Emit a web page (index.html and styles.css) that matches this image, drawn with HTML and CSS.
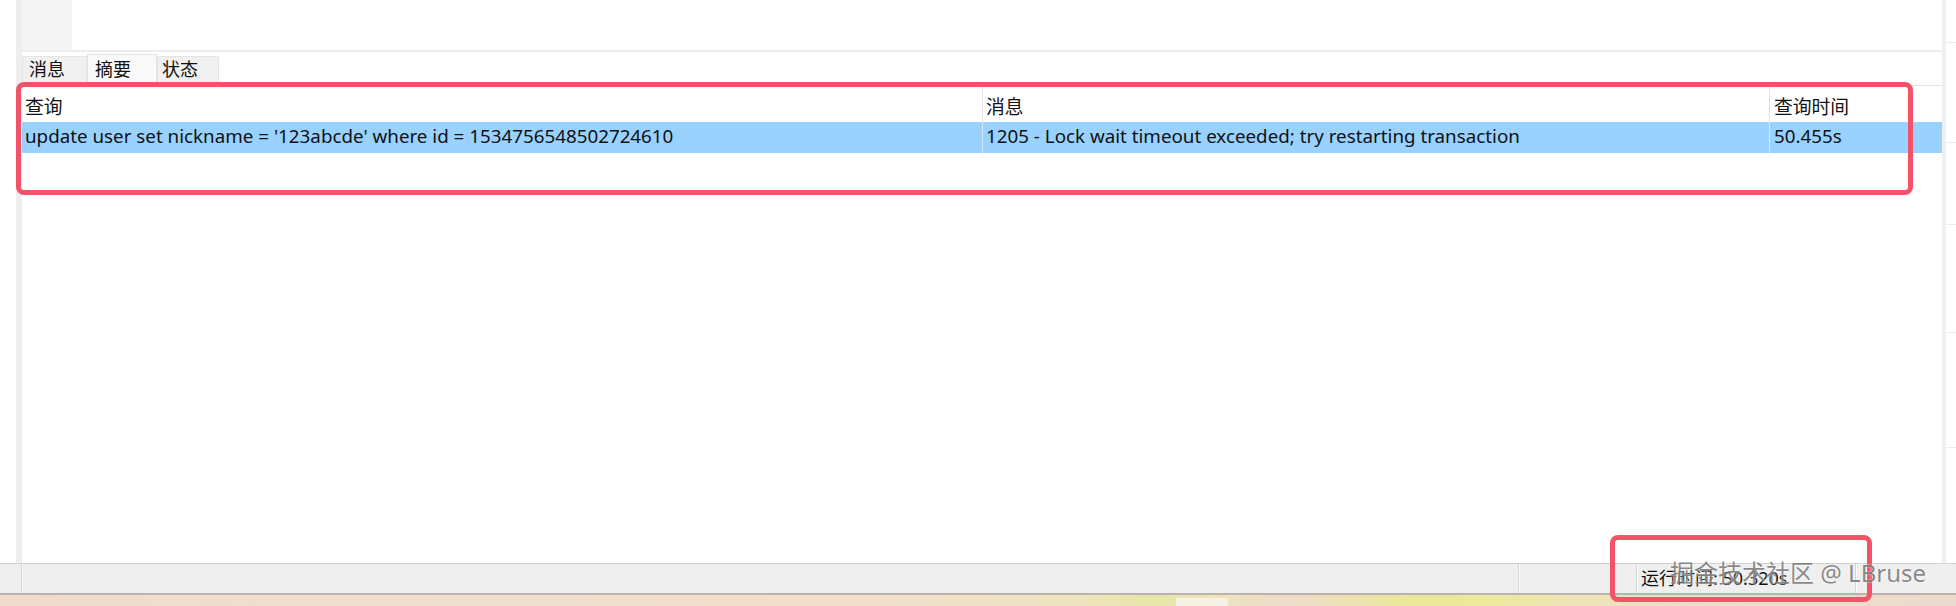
FILE: index.html
```html
<!DOCTYPE html>
<html lang="zh">
<head>
<meta charset="utf-8">
<title>查询结果</title>
<link rel="stylesheet" href="styles.css">
</head>
<body>
<div class="app">
  <div class="main">
    <div class="gutter"></div>
    <div class="panel">
      <div class="toparea"><div class="topblock"></div></div>
      <div class="tabs">
        <div class="tab t1">消息</div>
        <div class="tab t2 active">摘要</div>
        <div class="tab t3">状态</div>
      </div>
      <div class="grid">
        <div class="grid-row head">
          <div class="cell c1">查询</div>
          <div class="cell c2">消息</div>
          <div class="cell c3">查询时间</div>
        </div>
        <div class="grid-row sel">
          <div class="cell c1">update user set nickname = '123abcde' where id = 1534756548502724610</div>
          <div class="cell c2">1205 - Lock wait timeout exceeded; try restarting transaction</div>
          <div class="cell c3">50.455s</div>
        </div>
      </div>
    </div>
    <div class="side">
      <div class="side-line h1"></div>
      <div class="side-line h2"></div>
      <div class="side-line h3"></div>
      <div class="side-line h4"></div>
      <div class="side-line h5"></div>
    </div>
  </div>
  <div class="statusbar">
    <div class="sb s1"></div>
    <div class="sb s2"></div>
    <div class="sb s3"></div>
    <div class="sb s4">运行时间: 50.320s</div>
    <div class="sb s5"></div>
  </div>
  <div class="taskbar"><div class="task-item"></div></div>
  <div class="mark mark-grid"></div>
  <div class="mark mark-status"></div>
  <div class="watermark">掘金技术社区 @ LBruse</div>
</div>
</body>
</html>
```
FILE: styles.css
```css
* { box-sizing: border-box; }
html, body { margin: 0; padding: 0; background: #ffffff; }
body {
  font-family: "Noto Sans", "Noto Sans CJK SC", sans-serif;
  font-size: 18px;
  color: #111;
}
.app {
  position: relative;
  width: 1956px;
  height: 606px;
  overflow: hidden;
  display: flex;
  flex-direction: column;
}
.main {
  height: 563px;
  display: flex;
  flex: none;
}
.gutter { width: 16px; background: #fff; flex: none; }
.panel {
  width: 1930px;
  flex: none;
  border-left: 6px solid #eeeeee;
  border-right: 4px solid #efefef;
  display: flex;
  flex-direction: column;
  background: #fff;
}
.toparea {
  height: 52px;
  border-bottom: 2px solid #ececec;
  display: flex;
  flex: none;
}
.topblock { width: 50px; background: #f4f4f4; }
.tabs {
  height: 30px;
  display: flex;
  align-items: flex-end;
  flex: none;
}
.tab {
  height: 26px;
  background: #f0f0f0;
  border: 1px solid #e4e4e4;
  border-bottom: none;
  line-height: 24px;
  font-size: 18px;
  color: #111;
  white-space: nowrap;
}
.tab.active { height: 28px; background: #f9f9f9; line-height: 28px; }
.t1 { width: 65px; padding-left: 6px; }
.t2 { width: 70px; padding-left: 7px; }
.t3 { width: 62px; padding-left: 4px; }
.grid {
  margin-top: 3px;
  border-top: 1px solid #e3e3e3;
  display: flex;
  flex-direction: column;
  font-size: 18.8px;
}
.grid-row { display: flex; }
.cell { white-space: nowrap; overflow: hidden; padding-left: 3px; }
.c1 { width: 960px; flex: none; }
.c2 { width: 787px; flex: none; border-left: 1px solid #e3e3e3; }
.c3 { flex: 1; border-left: 1px solid #e3e3e3; padding-left: 4px; }
.head { height: 36px; }
.head .cell { padding-top: 9px; line-height: 25px; }
.sel { height: 31px; background: #99d1ff; }
.sel .cell { line-height: 28px; }
.sel .c2, .sel .c3 { border-left-color: #d4ebff; }
.side {
  width: 10px;
  flex: none;
  display: flex;
  flex-direction: column;
}
.side-line { border-bottom: 1px solid #ececec; flex: none; }
.h1 { height: 43px; }
.h2 { height: 100px; }
.h3 { height: 82px; }
.h4 { height: 108px; }
.h5 { height: 115px; }
.statusbar {
  height: 32px;
  flex: none;
  display: flex;
  background: #efefef;
  border-top: 1px solid #d2d2d2;
  border-bottom: 2px solid #bab2ab;
}
.sb { height: 100%; flex: none; }
.sb + .sb { border-left: 1px solid #d6d6d6; box-shadow: inset 1px 0 0 #fafafa; }
.s1 { width: 21px; }
.s2 { width: 1497px; }
.s3 { width: 118px; }
.s4 { width: 219px; padding-left: 4px; line-height: 29px; font-size: 18px; color: #111; white-space: nowrap; }
.s5 { flex: 1; }
.taskbar {
  flex: 1;
  position: relative;
  background: linear-gradient(90deg, #efdccd 0%, #f1dfcb 45%, #eee3bf 55%, #e6e7a6 59%, #ece4bd 62%, #eedbc9 66%, #ece89a 72%, #ece89c 76%, #eee4b4 80%, #efdccb 88%, #ecdbcc 100%);
}
.task-item {
  position: absolute;
  left: 1176px;
  top: 3px;
  width: 52px;
  height: 10px;
  background: #f5f1e4;
  border-radius: 2px;
}
.mark {
  position: absolute;
  border: 5px solid #f35369;
  border-radius: 8px;
}
.mark-grid { left: 16px; top: 82px; width: 1897px; height: 113px; }
.mark-status { left: 1610px; top: 535px; width: 262px; height: 67px; }
.watermark {
  position: absolute;
  left: 1670px;
  top: 557px;
  font-family: "Noto Sans", "Noto Sans CJK SC", sans-serif;
  font-size: 24px;
  line-height: 32px;
  color: rgba(105, 105, 105, 0.78);
  text-shadow: 0 0 2px rgba(255, 255, 255, 0.9);
  white-space: nowrap;
}
```
